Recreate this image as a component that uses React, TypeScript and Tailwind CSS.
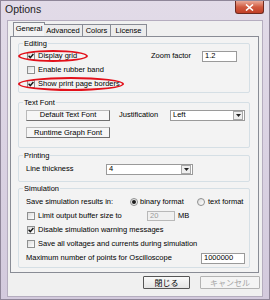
import React from 'react';

const font = 'font-["Liberation_Sans",Arial,sans-serif]';

const Check = ({ checked }: { checked?: boolean }) => (
  <span className="w-[8px] h-[8px] border border-[#8e8f8f] bg-linear-to-br from-[#dcdcdc] to-white flex items-center justify-center shrink-0">
    {checked && (
      <svg width="6" height="6" viewBox="0 0 6 6">
        <path d="M0.6 2.8 L2.3 4.6 L5.4 1" stroke="#151515" strokeWidth="1.4" fill="none" />
      </svg>
    )}
  </span>
);

const Radio = ({ on }: { on?: boolean }) => (
  <span className="w-[8px] h-[8px] rounded-full border border-[#8e8f8f] bg-linear-to-br from-[#dcdcdc] to-white flex items-center justify-center shrink-0">
    {on && <span className="w-[4px] h-[4px] rounded-full bg-[#1b1b1b]" />}
  </span>
);

const Group = ({ label, className, children }: { label: string; className: string; children: React.ReactNode }) => (
  <div className={`relative border border-[#d5dfe5] rounded-[2px] ${className}`}>
    <span className="absolute left-[4px] -top-[5px] px-[1px] bg-[#f3f3f3] leading-[9px]">{label}</span>
    {children}
  </div>
);

const Btn = ({ children, className }: { children: React.ReactNode; className: string }) => (
  <div className={`h-[11px] border border-[#b9b9b9] border-r-[#6f6f6f] border-b-[#6f6f6f] bg-[#f6f6f6] flex items-center justify-center leading-none ${className}`}>
    {children}
  </div>
);

const Select = ({ value, className }: { value: string; className: string }) => (
  <div className={`h-[11px] border border-[#9a9a9a] bg-white flex items-center ${className}`}>
    <span className="flex-1 pl-[2px] leading-none">{value}</span>
    <span className="w-[10px] h-[9px] mr-[1px] border border-[#a8a8a8] bg-[#eeeeee] flex items-center justify-center">
      <svg width="5" height="3" viewBox="0 0 5 3">
        <path d="M0 0 H5 L2.5 3 Z" fill="#222" />
      </svg>
    </span>
  </div>
);

export default function App() {
  return (
    <div className={`w-[270px] h-[300px] bg-linear-to-b from-[#e2dbe8] to-[#d3cadd] border border-[#8f8699] overflow-hidden ${font} text-[7.5px] text-black`}>
      {/* title bar */}
      <div className="h-[19px] flex items-start">
        <span className="pl-[4px] pt-[2px] text-[10.5px] leading-[12px] text-[#1e1e1e]">Options</span>
        <div className="ml-auto mr-[5px] w-[29px] h-[13px] rounded-b-[3px] border border-[#6e2a20] border-t-0 bg-linear-to-b from-[#e9a998] via-[#d05a40] to-[#c13f27] flex items-center justify-center">
          <svg width="9" height="7" viewBox="0 0 9 7">
            <path d="M1 0.5 L8 6.5 M8 0.5 L1 6.5" stroke="#fff" strokeWidth="1.6" />
          </svg>
        </div>
      </div>

      {/* client */}
      <div className="ml-[6px] w-[256px] h-[277px] bg-[#f0f0f0] border border-[#b5adbf]">
        {/* tabs */}
        <div className="mt-[1px] h-[14px] pl-[5px] flex items-end">
          <div className="h-[14px] w-[32px] border border-b-0 border-[#898c95] bg-[#f3f3f3] flex items-center justify-center leading-none pb-[1px]">General</div>
          <div className="h-[12px] w-[39px] -ml-px border border-b-0 border-l-0 border-[#898c95] bg-[#ececec] flex items-center justify-center leading-none">Advanced</div>
          <div className="h-[12px] w-[28px] border border-b-0 border-l-0 border-[#898c95] bg-[#ececec] flex items-center justify-center leading-none">Colors</div>
          <div className="h-[12px] w-[36px] border border-b-0 border-l-0 border-[#898c95] bg-[#ececec] flex items-center justify-center leading-none">License</div>
        </div>

        {/* panel */}
        <div className="ml-[2px] w-[249px] h-[237px] border border-[#898c95] bg-[#f3f3f3] pt-[6px] pl-[7px] flex flex-col">
          <Group label="Editing" className="w-[232px] h-[50px] pt-[5px] pl-[8px] pr-[12px]">
            <div className="h-[14px] flex items-center">
              <Check checked />
              <span className="ml-[3px]">Display grid</span>
              <span className="ml-auto">Zoom factor</span>
              <div className="ml-[11px] w-[35px] h-[11px] border border-[#9a9a9a] bg-white pl-[2px] flex items-center leading-none">1.2</div>
            </div>
            <div className="h-[14px] flex items-center">
              <Check />
              <span className="ml-[3px]">Enable rubber band</span>
            </div>
            <div className="h-[14px] flex items-center">
              <Check checked />
              <span className="ml-[3px]">Show print page borders</span>
            </div>
            {/* highlight marks */}
            <span className="absolute left-[-1px] top-[6px] w-[70px] h-[12px] rounded-[50%] border-2 border-[#e3101a]" />
            <span className="absolute left-[-1px] top-[33px] w-[106px] h-[14px] rounded-[50%] border-2 border-[#e3101a]" />
          </Group>

          <Group label="Text Font" className="mt-[9px] w-[232px] h-[46px] pt-[6px] pl-[7px]">
            <div className="h-[12px] flex items-center">
              <Btn className="w-[84px]">Default Text Font</Btn>
              <span className="ml-[9px] w-[51px]">Justification</span>
              <Select value="Left" className="w-[75px]" />
            </div>
            <div className="mt-[6px] flex">
              <Btn className="w-[84px]">Runtime Graph Font</Btn>
            </div>
          </Group>

          <Group label="Printing" className="mt-[7px] w-[232px] h-[27px] pt-[7px] pl-[7px]">
            <div className="h-[12px] flex items-center">
              <span className="w-[80px]">Line thickness</span>
              <Select value="4" className="w-[87px]" />
            </div>
          </Group>

          <Group label="Simulation" className="mt-[6px] w-[232px] h-[80px] pt-[6px] pl-[7px]">
            <div className="h-[14px] flex items-center">
              <span className="w-[104px]">Save simulation results in:</span>
              <span className="w-[67px] flex items-center">
                <Radio on />
                <span className="ml-[2px]">binary format</span>
              </span>
              <Radio />
              <span className="ml-[3px]">text format</span>
            </div>
            <div className="h-[14px] flex items-center">
              <span className="w-[121px] flex items-center pl-[1px]">
                <Check />
                <span className="ml-[3px]">Limit output buffer size to</span>
              </span>
              <div className="w-[28px] h-[10px] border border-[#b8b8b8] bg-[#f0f0f0] pl-[2px] text-[#9a9a9a] flex items-center leading-none">20</div>
              <span className="ml-[3px]">MB</span>
            </div>
            <div className="h-[14px] flex items-center pl-[1px]">
              <Check checked />
              <span className="ml-[3px]">Disable simulation warning messages</span>
            </div>
            <div className="h-[14px] flex items-center pl-[1px]">
              <Check />
              <span className="ml-[3px]">Save all voltages and currents during simulation</span>
            </div>
            <div className="h-[14px] flex items-center">
              <span className="w-[175px]">Maximum number of points for Oscilloscope</span>
              <div className="w-[44px] h-[11px] border border-[#9a9a9a] bg-white pl-[2px] flex items-center leading-none">1000000</div>
            </div>
          </Group>
        </div>

        {/* dialog buttons */}
        <div className='mt-[3px] flex justify-end gap-[10px] pr-[2px] font-["Noto_Sans_CJK_JP",sans-serif] text-[8px]'>
          <div className="w-[47px] h-[13px] border border-[#555] rounded-[1px] bg-linear-to-b from-[#fafafa] to-[#e4e4e4] flex items-center justify-center leading-none">閉じる</div>
          <div className="w-[60px] h-[13px] border border-[#b3b3b3] rounded-[1px] bg-[#f4f4f4] text-[#a5a5a5] flex items-center justify-center leading-none">キャンセル</div>
        </div>
      </div>
    </div>
  );
}
